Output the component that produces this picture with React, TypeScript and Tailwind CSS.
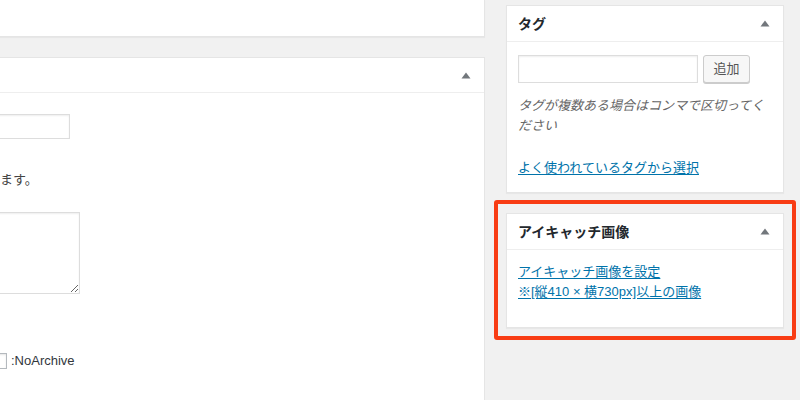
import React from 'react';

const font = "font-['Liberation_Sans','Noto_Sans_CJK_JP',sans-serif]";

const Toggle: React.FC = () => (
    <svg width="10" height="7" viewBox="0 0 10 7" className="shrink-0">
        <polygon points="5,0.5 9.5,6.5 0.5,6.5" fill="#72777c" />
    </svg>
);

const PostBox: React.FC<{ title?: string; className?: string; children: React.ReactNode }> = ({ title, className = '', children }) => (
    <div className={`bg-white border border-[#e5e5e5] shadow-[0_1px_1px_rgba(0,0,0,0.04)] ${className}`}>
        <div className="h-[36px] border-b border-[#eeeeee] flex items-center justify-between pl-[11px] pr-[13px]">
            <h2 className="text-[14px] font-bold text-[#23282d] leading-none">{title}</h2>
            <Toggle />
        </div>
        {children}
    </div>
);

const App: React.FC = () => {
    return (
        <div className={`w-[800px] h-[400px] overflow-hidden bg-[#f1f1f1] flex ${font} text-[13px] text-[#444]`}>
            {/* main column */}
            <div className="w-[485px] shrink-0 flex flex-col">
                <div className="h-[37px] bg-white border-r border-b border-[#e5e5e5] shadow-[0_1px_1px_rgba(0,0,0,0.04)]" />
                <div className="mt-[20px] flex-grow bg-white border-t border-r border-[#e5e5e5]">
                    <div className="h-[35px] border-b border-[#eeeeee] flex items-center justify-end pr-[13px]">
                        <Toggle />
                    </div>
                    <div className="flex flex-col items-start">
                        <input type="text" className="mt-[21px] w-[200px] -ml-[130px] h-[25px] border border-[#dddddd] shadow-[inset_0_1px_2px_rgba(0,0,0,0.07)] bg-white" />
                        <p className="mt-[31px] leading-[20px] text-[#444]">ます。</p>
                        <textarea className="mt-[22px] w-[300px] -ml-[220px] h-[82px] border border-[#dddddd] shadow-[inset_0_1px_2px_rgba(0,0,0,0.07)] bg-white resize" />
                        <div className="mt-[57px] flex items-center">
                            <span className="block w-[16px] h-[16px] -ml-[9px] border border-[#b4b9be] bg-white shadow-[inset_0_1px_2px_rgba(0,0,0,0.1)]" />
                            <span className="ml-[4px] text-[#32373c] leading-[20px]">:NoArchive</span>
                        </div>
                    </div>
                </div>
            </div>

            {/* sidebar */}
            <div className="ml-[21px] w-[278px] shrink-0 pt-[5px] flex flex-col">
                <PostBox title="タグ">
                    <div className="pt-[13px] px-[11px] pb-[14px]">
                        <div className="flex items-center gap-[5px]">
                            <input type="text" className="w-[180px] h-[28px] border border-[#dddddd] shadow-[inset_0_1px_2px_rgba(0,0,0,0.07)] bg-white" />
                            <button className="w-[47px] h-[28px] rounded-[3px] border border-[#cccccc] bg-[#f7f7f7] shadow-[0_1px_0_#cccccc] text-[13px] text-[#555]">追加</button>
                        </div>
                        <p className="mt-[13px] italic text-[#666] leading-[20px]">タグが複数ある場合はコンマで区切ってください</p>
                        <a href="#" className="block mt-[22px] leading-[20px] text-[#0073aa] underline underline-offset-[2px]">よく使われているタグから選択</a>
                    </div>
                </PostBox>

                <div className="mt-[7px] -ml-[12px] w-[302px] border-4 border-[#f83c14] rounded-[3px] pt-[9px] pb-[8px] pl-[8px] pr-[8px]">
                    <PostBox title="アイキャッチ画像">
                        <div className="pt-[12px] px-[11px] pb-[25px] flex flex-col items-start">
                            <a href="#" className="leading-[20px] text-[#0073aa] underline underline-offset-[2px]">アイキャッチ画像を設定</a>
                            <a href="#" className="leading-[20px] text-[#0073aa] underline underline-offset-[2px]">※[縦410 × 横730px]以上の画像</a>
                        </div>
                    </PostBox>
                </div>
            </div>
        </div>
    );
};

export default App;
